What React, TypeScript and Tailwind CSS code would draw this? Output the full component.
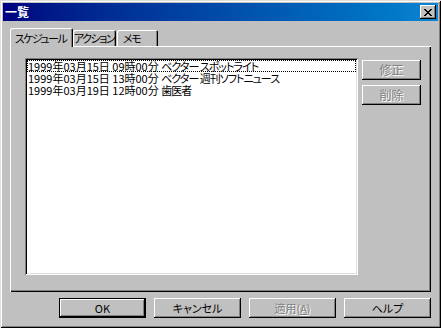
const font = "font-['Noto_Sans_CJK_JP','Noto_Sans',sans-serif] [font-feature-settings:'palt']";

const raised =
  'shadow-[inset_-1px_-1px_#000,inset_1px_1px_#fff,inset_-2px_-2px_#808080]';

const tabEdge = 'rounded-t-[2px] shadow-[inset_1px_1px_#fff,inset_-1px_0_#000,inset_-2px_0_#808080]';

const rows = [
  { when: '1999年03月15日 09時00分', what: 'ベクター スポットライト' },
  { when: '1999年03月15日 13時00分', what: 'ベクター 週刊ソフトニュース' },
  { when: '1999年03月19日 12時00分', what: '歯医者' },
];

function CloseGlyph() {
  const px = [
    [0, 0], [1, 0], [6, 0], [7, 0],
    [1, 1], [2, 1], [5, 1], [6, 1],
    [2, 2], [3, 2], [4, 2], [5, 2],
    [3, 3], [4, 3],
    [2, 4], [3, 4], [4, 4], [5, 4],
    [1, 5], [2, 5], [5, 5], [6, 5],
    [0, 6], [1, 6], [6, 6], [7, 6],
  ];
  return (
    <svg width="8" height="7" viewBox="0 0 8 7" shapeRendering="crispEdges">
      {px.map(([x, y]) => (
        <rect key={`${x}-${y}`} x={x} y={y} width="1" height="1" fill="#000" />
      ))}
    </svg>
  );
}

function SideButton({ label }: { label: string }) {
  return (
    <div className={`w-[59px] h-[20px] flex items-center justify-center bg-[#c0c0c0] text-[12px] leading-none text-[#808080] [text-shadow:1px_1px_#fff] ${raised}`}>
      {label}
    </div>
  );
}

function BottomButton({ children, isDefault, disabled }: { children: React.ReactNode; isDefault?: boolean; disabled?: boolean }) {
  return (
    <div
      className={`w-[87px] h-[20px] flex items-center justify-center bg-[#c0c0c0] text-[11px] leading-none whitespace-nowrap ${
        isDefault ? 'border border-black' : ''
      } ${disabled ? 'text-[#808080] [text-shadow:1px_1px_#fff]' : 'text-black'} ${raised}`}
    >
      {children}
    </div>
  );
}

export default function App() {
  return (
    <div className={`${font} w-[441px] h-[328px] bg-[#c0c0c0] p-[3px] flex flex-col shadow-[inset_1px_1px_#dfdfdf,inset_-1px_-1px_#000,inset_2px_2px_#fff,inset_-2px_-2px_#808080] overflow-hidden`}>
      {/* title bar */}
      <div className="h-[18px] shrink-0 flex items-center justify-between bg-gradient-to-r from-[#000080] to-[#1084d0] pl-[2px] pr-[2px]">
        <span className="text-white font-bold text-[12px] leading-none">一覧</span>
        <div className={`w-[16px] h-[14px] bg-[#c0c0c0] flex items-center justify-center ${raised}`}>
          <CloseGlyph />
        </div>
      </div>

      <div className="flex-1 flex flex-col px-[7px] pt-[7px]">
        {/* tabs */}
        <div className="h-[18px] flex items-end text-[11px] leading-none tracking-[-1.5px] text-black whitespace-nowrap">
          <div className={`relative z-10 -mb-[1px] w-[63px] h-[19px] bg-[#c0c0c0] flex items-start justify-center pt-[5px] pr-[2px] ${tabEdge}`}>
            スケジュール
          </div>
          <div className={`w-[43px] h-[16px] bg-[#c0c0c0] flex items-center justify-center pr-[1px] ${tabEdge}`}>
            アクション
          </div>
          <div className={`ml-[1px] w-[41px] h-[16px] bg-[#c0c0c0] flex items-center pl-[6px] ${tabEdge}`}>
            メモ
          </div>
        </div>

        {/* tab panel */}
        <div className="h-[246px] flex gap-[4px] pl-[15px] pt-[12px] shadow-[inset_1px_1px_#fff,inset_-1px_-1px_#000,inset_-2px_-2px_#808080]">
          <div className="w-[333px] h-[217px] bg-white p-[2px] shadow-[inset_1px_1px_#808080,inset_-1px_-1px_#fff,inset_2px_2px_#000,inset_-2px_-2px_#dfdfdf]">
            {rows.map((r, i) => (
              <div
                key={r.when + r.what}
                className={`h-[12px] pl-[1px] text-[11px] leading-[12px] text-black whitespace-nowrap ${
                  i === 0 ? 'outline outline-1 outline-dotted outline-black -outline-offset-1' : ''
                }`}
              >
                {r.when} <span className="tracking-[-1px]">{r.what}</span>
              </div>
            ))}
          </div>
          <div className="flex flex-col gap-[5px] pt-[2px]">
            <SideButton label="修正" />
            <SideButton label="削除" />
          </div>
        </div>

        {/* bottom buttons */}
        <div className="mt-[6px] flex justify-end gap-[8px]">
          <BottomButton isDefault>OK</BottomButton>
          <BottomButton>キャンセル</BottomButton>
          <BottomButton disabled>
            適用(<span className="underline">A</span>)
          </BottomButton>
          <BottomButton>ヘルプ</BottomButton>
        </div>
      </div>
    </div>
  );
}
